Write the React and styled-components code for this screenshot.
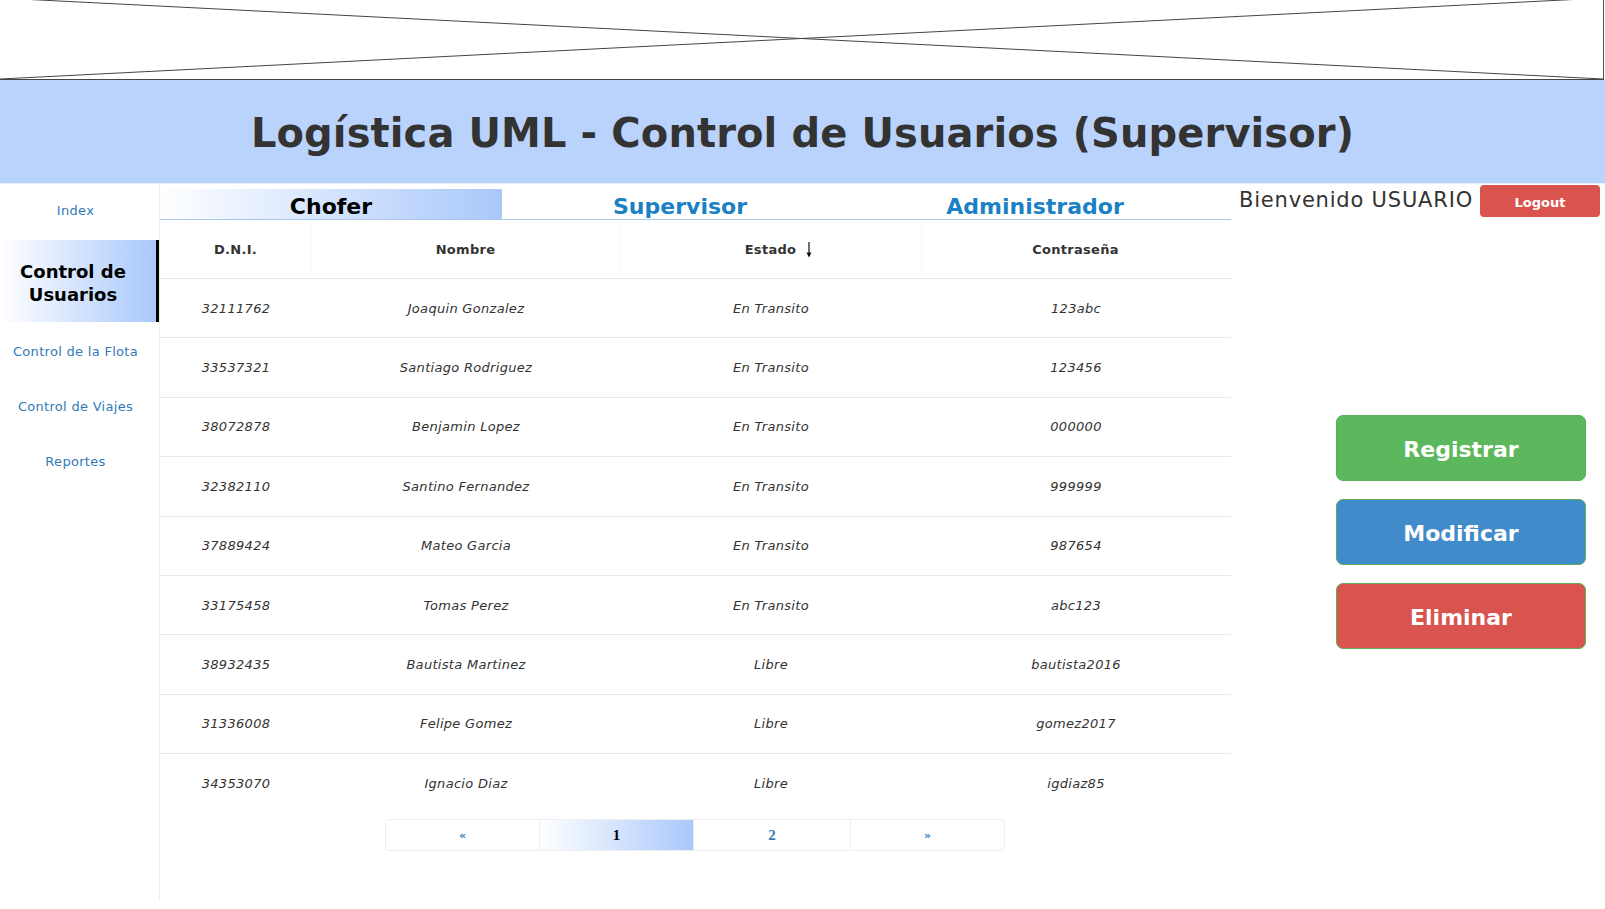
import React from "react";
import styled, { createGlobalStyle } from "styled-components";

const GlobalStyle = createGlobalStyle`
  * {
    margin: 0;
    padding: 0;
    box-sizing: border-box;
  }
  body {
    font-family: "DejaVu Sans", Verdana, sans-serif;
    background: #fff;
    color: #333;
    overflow: hidden;
  }
`;

const Placeholder = styled.div`
  width: 1604px;
  height: 80px;
  border-right: 1px solid #555;
  border-bottom: 1px solid #444;
  svg {
    display: block;
  }
`;

const Banner = styled.header`
  height: 104px;
  background: #bad3fc;
  display: flex;
  align-items: center;
  justify-content: center;
  border-bottom: 1px solid #e8f0fc;
`;

const Title = styled.h1`
  font-size: 40px;
  font-weight: bold;
  color: #333;
  letter-spacing: 0.1px;
  padding-top: 2px;
`;

const Body = styled.div`
  display: flex;
  height: 717px;
`;

const Sidebar = styled.nav`
  width: 160px;
  flex-shrink: 0;
  border-right: 1px solid #eee;
  display: flex;
  flex-direction: column;
`;

const NavItem = styled.a`
  display: flex;
  align-items: center;
  justify-content: center;
  text-align: center;
  text-decoration: none;
  height: ${(p) => p.$h || 55}px;
  padding-right: 8px;
  font-size: 13px;
  color: #337ab7;
  letter-spacing: 0.3px;
`;

const ActiveItem = styled.div`
  height: 82px;
  margin: 4px 0 2px;
  padding: 3px 10px 0 0;
  display: flex;
  align-items: center;
  justify-content: center;
  text-align: center;
  font-size: 18px;
  font-weight: bold;
  line-height: 23px;
  color: #000;
  background: linear-gradient(to right, #ffffff, #a9c8fb);
  border-right: 3px solid #000;
`;

const Main = styled.main`
  width: 1071px;
  flex-shrink: 0;
  padding-top: 5px;
  display: flex;
  flex-direction: column;
`;

const TabBar = styled.div`
  display: grid;
  grid-template-columns: 342px 356px 354px 1fr;
  height: 31px;
  border-bottom: 1px solid #a9c8f0;
`;

const Tab = styled.a`
  display: flex;
  align-items: center;
  justify-content: center;
  padding-top: 4px;
  font-size: 22px;
  font-weight: bold;
  text-decoration: none;
  color: ${(p) => (p.$active ? "#000" : "#1a82c4")};
  background: ${(p) =>
    p.$active ? "linear-gradient(to right, #ffffff, #a9c8fb)" : "transparent"};
`;

const cols = "152px 308px 302px 308px";

const HeadRow = styled.div`
  display: grid;
  grid-template-columns: ${cols};
  height: 59px;
  border-bottom: 1px solid #e6e6e6;
  padding: 3px 0 2px;
`;

const HeadCell = styled.div`
  display: flex;
  align-items: center;
  justify-content: center;
  gap: 10px;
  font-size: 13px;
  font-weight: bold;
  color: #333;
  letter-spacing: 0.3px;
  border-right: 1px solid ${(p) => (p.$last ? "transparent" : "#f9f9f9")};
`;

const Row = styled.div`
  display: grid;
  grid-template-columns: ${cols};
  height: 59.4px;
  border-bottom: 1px solid ${(p) => (p.$last ? "transparent" : "#e8e8e8")};
`;

const Cell = styled.div`
  display: flex;
  align-items: center;
  justify-content: center;
  font-size: 13px;
  font-style: italic;
  color: #333;
  letter-spacing: 0.3px;
`;

const Pager = styled.div`
  display: flex;
  justify-content: center;
  margin-top: 5px;
`;

const PageItem = styled.a`
  width: ${(p) => p.$w || 155}px;
  height: 32px;
  display: flex;
  align-items: center;
  justify-content: center;
  padding-top: 2px;
  text-decoration: none;
  border: 1px solid #eee;
  margin-left: -1px;
  font-family: ${(p) =>
    p.$num ? '"Liberation Serif", "Times New Roman", serif' : '"DejaVu Sans", sans-serif'};
  font-size: ${(p) => (p.$num ? "15px" : "11px")};
  font-weight: bold;
  color: ${(p) => (p.$active ? "#000" : "#337ab7")};
  background: ${(p) =>
    p.$active ? "linear-gradient(to right, #ffffff, #a9c8fb)" : "#fff"};
  &:first-child {
    border-radius: 4px 0 0 4px;
  }
  &:last-child {
    border-radius: 0 4px 4px 0;
  }
`;

const RightPanel = styled.aside`
  flex: 1;
  display: flex;
  flex-direction: column;
  padding: 1px 5px 0 8px;
`;

const Welcome = styled.div`
  display: flex;
  align-items: center;
  justify-content: space-between;
  height: 32px;
`;

const WelcomeText = styled.span`
  font-size: 21px;
  letter-spacing: 0.8px;
  color: #333;
  margin-top: -3px;
  white-space: nowrap;
`;

const LogoutButton = styled.button`
  width: 120px;
  height: 32px;
  border: none;
  border-radius: 4px;
  background: #d9534f;
  color: #fff;
  font-family: inherit;
  font-size: 13px;
  font-weight: bold;
  padding-top: 2px;
`;

const Actions = styled.div`
  display: flex;
  flex-direction: column;
  gap: 18px;
  margin: 198px 0 0 97px;
  width: 250px;
`;

const ActionButton = styled.button`
  height: 66px;
  border: 1px solid #5fae5b;
  border-radius: 7px;
  background: ${(p) => p.$bg};
  color: #fff;
  font-family: inherit;
  font-size: 22px;
  font-weight: bold;
  padding-top: 2px;
`;

const SortArrow = () => (
  <svg width="6" height="16" viewBox="0 0 6 16">
    <line x1="3" y1="0" x2="3" y2="14" stroke="#111" strokeWidth="1.2" />
    <path d="M0.5 10.5 L3 15.5 L5.5 10.5 Z" fill="#111" />
  </svg>
);

const usuarios = [
  ["32111762", "Joaquin Gonzalez", "En Transito", "123abc"],
  ["33537321", "Santiago Rodriguez", "En Transito", "123456"],
  ["38072878", "Benjamin Lopez", "En Transito", "000000"],
  ["32382110", "Santino Fernandez", "En Transito", "999999"],
  ["37889424", "Mateo Garcia", "En Transito", "987654"],
  ["33175458", "Tomas Perez", "En Transito", "abc123"],
  ["38932435", "Bautista Martinez", "Libre", "bautista2016"],
  ["31336008", "Felipe Gomez", "Libre", "gomez2017"],
  ["34353070", "Ignacio Diaz", "Libre", "igdiaz85"],
];

export default function App() {
  return (
    <>
      <GlobalStyle />
      <Placeholder>
        <svg width="1603" height="79" viewBox="0 0 1603 79">
          <line x1="0" y1="-2" x2="1603" y2="79" stroke="#444" strokeWidth="1" />
          <line x1="0" y1="79" x2="1603" y2="-2" stroke="#444" strokeWidth="1" />
        </svg>
      </Placeholder>
      <Banner>
        <Title>Logística UML - Control de Usuarios (Supervisor)</Title>
      </Banner>
      <Body>
        <Sidebar>
          <NavItem href="#" $h={52}>Index</NavItem>
          <ActiveItem>
            Control de
            <br />
            Usuarios
          </ActiveItem>
          <NavItem href="#">Control de la Flota</NavItem>
          <NavItem href="#">Control de Viajes</NavItem>
          <NavItem href="#">Reportes</NavItem>
        </Sidebar>

        <Main>
          <TabBar>
            <Tab href="#" $active>Chofer</Tab>
            <Tab href="#">Supervisor</Tab>
            <Tab href="#">Administrador</Tab>
          </TabBar>

          <HeadRow>
            <HeadCell>D.N.I.</HeadCell>
            <HeadCell>Nombre</HeadCell>
            <HeadCell>
              <span style={{ marginLeft: 16 }}>Estado</span>
              <SortArrow />
            </HeadCell>
            <HeadCell $last>Contraseña</HeadCell>
          </HeadRow>

          {usuarios.map((u, i) => (
            <Row key={u[0]} $last={i === usuarios.length - 1}>
              {u.map((v) => (
                <Cell key={v}>{v}</Cell>
              ))}
            </Row>
          ))}

          <Pager>
            <PageItem href="#">«</PageItem>
            <PageItem href="#" $num $active>1</PageItem>
            <PageItem href="#" $num $w={158}>2</PageItem>
            <PageItem href="#">»</PageItem>
          </Pager>
        </Main>

        <RightPanel>
          <Welcome>
            <WelcomeText>Bienvenido USUARIO</WelcomeText>
            <LogoutButton>Logout</LogoutButton>
          </Welcome>
          <Actions>
            <ActionButton $bg="#5cb85c">Registrar</ActionButton>
            <ActionButton $bg="#428bca">Modificar</ActionButton>
            <ActionButton $bg="#d9534f">Eliminar</ActionButton>
          </Actions>
        </RightPanel>
      </Body>
    </>
  );
}
